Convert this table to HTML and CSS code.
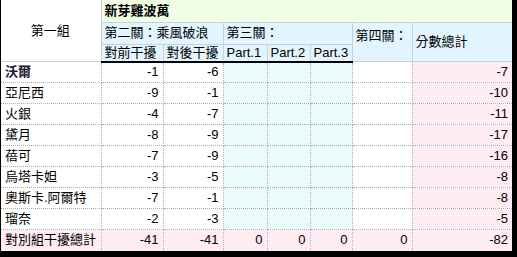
FILE: index.html
```html
<!DOCTYPE html>
<html lang="zh-Hant">
<head>
<meta charset="utf-8">
<title>新芽雞波萬</title>
<link rel="stylesheet" href="styles.css">
</head>
<body>
<div class="frame">
<table class="sheet">
  <colgroup>
    <col class="c-name">
    <col class="c-a">
    <col class="c-b">
    <col class="c-p1">
    <col class="c-p2">
    <col class="c-p3">
    <col class="c-four">
    <col class="c-total">
  </colgroup>
  <thead>
    <tr class="h1">
      <th rowspan="3" class="group">第一組</th>
      <th colspan="7" class="title">新芽雞波萬</th>
    </tr>
    <tr class="h2">
      <th colspan="2" class="hb">第二關：乘風破浪</th>
      <th colspan="3" class="hb">第三關：</th>
      <th rowspan="2" class="hb four">第四關：</th>
      <th rowspan="2" class="hb sum">分數總計</th>
    </tr>
    <tr class="h3">
      <th class="hb">對前干擾</th>
      <th class="hb">對後干擾</th>
      <th class="hb">Part.1</th>
      <th class="hb">Part.2</th>
      <th class="hb">Part.3</th>
    </tr>
  </thead>
  <tbody>
    <tr><td class="name strong">沃爾</td><td class="n">-1</td><td class="n">-6</td><td class="p"></td><td class="p"></td><td class="p"></td><td></td><td class="n pk">-7</td></tr>
    <tr><td class="name">亞尼西</td><td class="n">-9</td><td class="n">-1</td><td class="p"></td><td class="p"></td><td class="p"></td><td></td><td class="n pk">-10</td></tr>
    <tr><td class="name">火銀</td><td class="n">-4</td><td class="n">-7</td><td class="p"></td><td class="p"></td><td class="p"></td><td></td><td class="n pk">-11</td></tr>
    <tr><td class="name">黛月</td><td class="n">-8</td><td class="n">-9</td><td class="p"></td><td class="p"></td><td class="p"></td><td></td><td class="n pk">-17</td></tr>
    <tr><td class="name">蓓可</td><td class="n">-7</td><td class="n">-9</td><td class="p"></td><td class="p"></td><td class="p"></td><td></td><td class="n pk">-16</td></tr>
    <tr><td class="name">烏塔卡妲</td><td class="n">-3</td><td class="n">-5</td><td class="p"></td><td class="p"></td><td class="p"></td><td></td><td class="n pk">-8</td></tr>
    <tr><td class="name">奧斯卡.阿爾特</td><td class="n">-7</td><td class="n">-1</td><td class="p"></td><td class="p"></td><td class="p"></td><td></td><td class="n pk">-8</td></tr>
    <tr><td class="name">瑠奈</td><td class="n">-2</td><td class="n">-3</td><td class="p"></td><td class="p"></td><td class="p"></td><td></td><td class="n pk">-5</td></tr>
    <tr class="totals"><td class="name">對別組干擾總計</td><td class="n">-41</td><td class="n">-41</td><td class="n">0</td><td class="n">0</td><td class="n">0</td><td class="n">0</td><td class="n">-82</td></tr>
  </tbody>
</table>
</div>
</body>
</html>
```
FILE: styles.css
```css
html, body {
  margin: 0;
  padding: 0;
  background: #000;
}

.frame {
  padding: 0 5px 5px 1px;
  width: 511px;
  background: #000;
}

.sheet {
  border-collapse: collapse;
  table-layout: fixed;
  width: 511px;
  background: #fff;
  font-family: "Liberation Sans", "Noto Sans CJK TC", sans-serif;
  font-size: 13px;
  color: #000;
}

.c-name { width: 100px; }
.c-a { width: 62px; }
.c-b { width: 60px; }
.c-p1 { width: 44px; }
.c-p2 { width: 43px; }
.c-p3 { width: 42px; }
.c-four { width: 60px; }
.c-total { width: 100px; }

.sheet th,
.sheet td {
  padding: 0 4px 0 3px;
  white-space: nowrap;
  overflow: hidden;
  line-height: 16px;
  font-weight: normal;
  text-align: left;
}

.sheet th {
  border: 1px solid #c6d2d8;
}

.h1 { height: 22px; }
.h2 { height: 22px; }
.h3 { height: 17px; }

.h1 th { border-top: none; }

.group {
  background: #fff;
  text-align: center !important;
  border-left: none !important;
}

.title {
  background: #f0ffe4;
  font-weight: bold !important;
  border-right: none !important;
}

.hb {
  background: #e2f5fe;
}

.h2 .sum { border-right: none; }

.four {
  vertical-align: top;
  padding-top: 5px !important;
}

.sum {
  vertical-align: middle;
}

thead tr:last-child th,
.group {
  border-bottom: 2px solid #000;
}

.sheet tbody tr { height: 21px; }

.sheet td {
  border: 1px dotted #a4afb5;
  vertical-align: middle;
}

.sheet td:first-child { border-left: none; }
.sheet td:last-child { border-right: none; }
.sheet tbody tr:last-child td { border-bottom: none; }

.name {
  padding-left: 4px !important;
}

.strong {
  font-weight: bold !important;
  color: #1e1a36;
}

.n {
  text-align: right !important;
}

.p { background: #eafcfc; }
.pk { background: #ffebf2; }

.totals td { background: #ffebf2; }
```
